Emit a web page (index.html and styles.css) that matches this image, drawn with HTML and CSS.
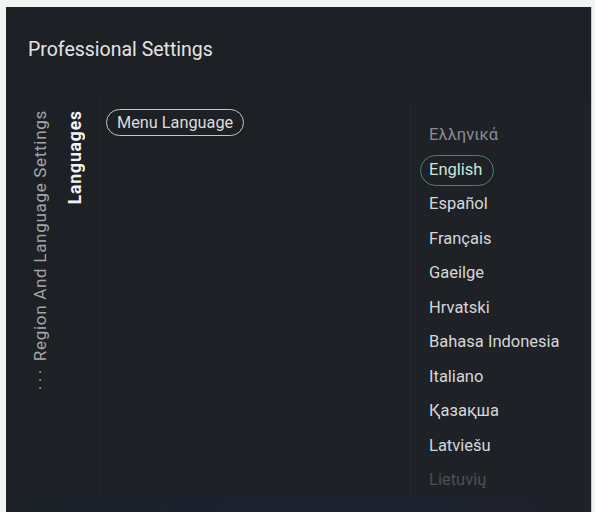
FILE: index.html
```html
<!DOCTYPE html>
<html>
<head>
<meta charset="utf-8">
<link rel="stylesheet" href="styles.css">
</head>
<body>
<div class="screen">
  <div class="header">Professional Settings</div>
  <div class="main">
    <div class="nav">
      <div class="vtext crumb"><span class="dots">&middot;&middot;&middot;</span> Region And Language Settings</div>
      <div class="vtext current">Languages</div>
    </div>
    <div class="mid">
      <div class="pill">Menu Language</div>
    </div>
    <div class="list">
      <div class="item faded">Ελληνικά</div>
      <div class="item selected">English</div>
      <div class="item">Español</div>
      <div class="item">Français</div>
      <div class="item">Gaeilge</div>
      <div class="item">Hrvatski</div>
      <div class="item">Bahasa Indonesia</div>
      <div class="item">Italiano</div>
      <div class="item">Қазақша</div>
      <div class="item">Latviešu</div>
      <div class="item dim">Lietuvių</div>
    </div>
  </div>
  <div class="footer"></div>
</div>
</body>
</html>
```
FILE: styles.css
```css
html, body {
  margin: 0;
  padding: 0;
}
body {
  background: #f2f3f3;
  width: 595px;
  height: 512px;
  overflow: hidden;
  font-family: Roboto, "Noto Sans", "DejaVu Sans", sans-serif;
}
.screen {
  margin: 7px 0 0 6px;
  width: 585px;
  height: 505px;
  background: #1d2024;
  display: flex;
  flex-direction: column;
  box-shadow: 1px 0 0 #c9cbcc;
}
.header {
  height: 93px;
  box-sizing: border-box;
  padding: 31px 0 0 22px;
  font-size: 19.5px;
  line-height: 24px;
  color: #e4e4e4;
}
.main {
  flex: 1;
  display: flex;
}
.nav {
  width: 94px;
  box-sizing: border-box;
  border-right: 1px solid #25282d;
  display: flex;
  align-items: flex-start;
  padding: 10px 0 0 25px;
  gap: 16px;
}
.vtext {
  writing-mode: vertical-rl;
  transform: rotate(180deg);
  white-space: nowrap;
}
.crumb {
  font-size: 17px;
  line-height: 18px;
  letter-spacing: 0.7px;
  color: #a3a5a7;
}
.dots {
  letter-spacing: 3.5px;
  margin-left: 2px;
}
.current {
  font-size: 17.5px;
  line-height: 20px;
  letter-spacing: 0.9px;
  font-weight: bold;
  color: #f2f2f2;
}
.mid {
  width: 311px;
  box-sizing: border-box;
  border-right: 1px solid #23262a;
  padding: 9px 0 0 6px;
}
.pill {
  display: inline-block;
  height: 27px;
  box-sizing: border-box;
  border: 1px solid #c4c5c6;
  border-radius: 14px;
  padding: 0 10px;
  font-size: 16.3px;
  line-height: 25px;
  color: #dcdcdc;
}
.list {
  flex: 1;
  background: #1e2125;
  padding: 20px 0 0 9px;
  display: flex;
  flex-direction: column;
  align-items: flex-start;
  gap: 3.5px;
}
.item {
  height: 31px;
  box-sizing: border-box;
  border: 1.5px solid transparent;
  border-radius: 16px;
  padding: 0 11px 0 8px;
  font-size: 16.5px;
  line-height: 28px;
  color: #d6d7d8;
  white-space: nowrap;
}
.item.faded {
  color: #8a8d90;
}
.item.dim {
  color: #4c5054;
}
.item.selected {
  border-color: #4b8170;
  color: #cde6dc;
}
.footer {
  height: 15px;
  background: linear-gradient(90deg, #1c2128 0%, #1b2230 40%, #1c2230 70%, #1d2129 100%);
}
```
